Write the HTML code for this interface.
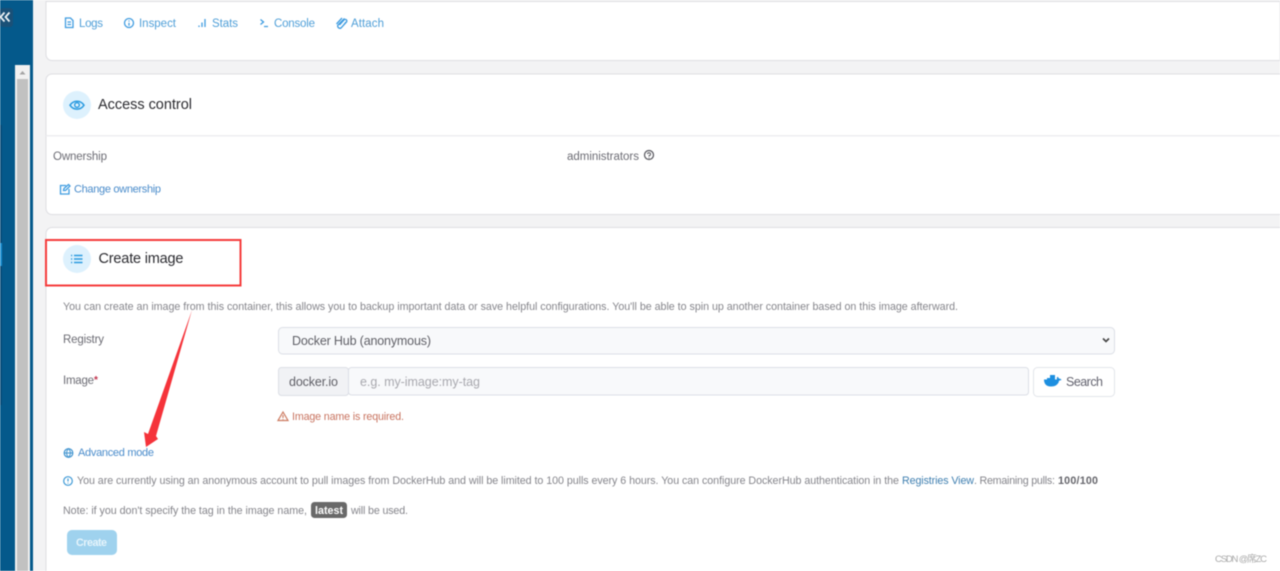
<!DOCTYPE html>
<html><head><meta charset="utf-8"><style>
html,body{margin:0;padding:0;width:1280px;height:571px;overflow:hidden;background:#fff}
svg{display:block;filter:blur(.4px)}
text{font-family:"Liberation Sans","Noto Sans CJK SC",sans-serif;font-size:11.5px;fill:#77777d}
.a{fill:#4f9fd8}.l{fill:#4a8ccb;font-size:11px}.h{font-size:14.500px;fill:#2b2b30}
.i{fill:none;stroke:#3f9ce0;stroke-width:1.300}
</style></head><body>
<svg width="1280" height="571" viewBox="0 0 1280 571" xmlns="http://www.w3.org/2000/svg">
<rect width="1280" height="571" fill="#f3f3f4"/>
<rect width="33" height="571" fill="#04598b"/>
<rect x="0" y="125" width="2" height="280" fill="#0a4e7a"/>
<rect x="0" y="243" width="2" height="23" fill="#1d8fd0"/>
<rect x="0" y="8" width="13" height="19" rx="3" fill="#1a5077"/>
<path d="M4.500 12.500l-4 4.500 4 4.500M9.500 12.500l-4 4.500 4 4.500" fill="none" stroke="#eef2f5" stroke-width="1.800"/>
<rect x="15" y="65" width="15" height="506" fill="#f1f1f1"/>
<rect x="17" y="79" width="11" height="492" fill="#c1c1c1"/>
<path d="M22.500 71l-3 3.500h6z" fill="#a3a3a3"/>
<!-- cards -->
<path d="M46 1.500H1280V60.500H52a6 6 0 0 1-6-6z" fill="#fff" stroke="#dedee2"/>
<rect x="46" y="74" width="1250" height="140.500" rx="6" fill="#fff" stroke="#dedee2"/>
<rect x="46" y="135" width="1234" height="1.500" fill="#eeeef0"/>
<rect x="46" y="227.500" width="1250" height="360" rx="6" fill="#fff" stroke="#dedee2"/>
<!-- tabs -->
<path class="i" d="M65.500 18h5l2.500 2.500v7h-7.500zM67.500 22h3.500M67.500 24.500h3.500"/>
<text class="a" x="79" y="27" textLength="24">Logs</text>
<circle class="i" cx="129" cy="23" r="4.500"/><path class="i" d="M129 20.500v1M129 22.800v3"/>
<text class="a" x="139" y="27" textLength="37">Inspect</text>
<path class="i" d="M199 27v-1.500M202 27v-4.500M205 27v-8" stroke-width="1.500"/>
<text class="a" x="212" y="27" textLength="26">Stats</text>
<path class="i" d="M260.500 19.500l3 2.500-3 2.500M264 26.500h4"/>
<text class="a" x="274" y="27" textLength="41">Console</text>
<path class="i" d="M344.500 18.500l-6.500 6.500a2.200 2.200 0 0 0 3 3l5.500-6a1.500 1.500 0 0 0-2.500-2l-4.500 5M342 18l-5.500 6M346 22l-4 5"/>
<text class="a" x="351" y="27" textLength="33">Attach</text>
<!-- access -->
<circle cx="77" cy="105" r="14" fill="#ddf1fd"/>
<path d="M70 105.200c3.500-5.300 10.500-5.300 14 0-3.500 5.300-10.500 5.300-14 0z" fill="none" stroke="#2b9be0" stroke-width="1.500"/>
<circle cx="77" cy="105" r="2.300" fill="none" stroke="#2b9be0" stroke-width="1.400"/>
<text class="h" x="98" y="109" textLength="94">Access control</text>
<text x="53" y="160" textLength="54" style="fill:#6c6c74">Ownership</text>
<text x="567" y="160" textLength="72" style="fill:#6c6c74">administrators</text>
<circle cx="649" cy="155" r="4.500" fill="none" stroke="#55555c" stroke-width="1.200"/><path d="M647.500 154a1.500 1.500 0 1 1 1.500 1.700v.8M649 157.500v.8" fill="none" stroke="#55555c" stroke-width="1"/>
<path class="i" d="M66 185.500h-5.500v8.500h8.500v-5M63.500 190.500l.5-2 4.500-4 1.500 1.500-4.500 4.500z"/>
<text class="l" x="74" y="192.500" textLength="87">Change ownership</text>
<!-- create image -->
<circle cx="77" cy="259" r="14" fill="#ddf1fd"/>
<path d="M74 255.500h8.500M74 259h8.500M74 262.500h8.500M71 255.500h1.200M71 259h1.200M71 262.500h1.200" stroke="#2b9be0" stroke-width="1.400" fill="none"/>
<text class="h" x="98.500" y="263" textLength="85">Create image</text>
<rect x="46" y="240" width="194.500" height="45.500" fill="none" stroke="#f53c3c" stroke-width="2"/>
<text x="63" y="310" textLength="895" style="fill:#85858b;font-size:10.700px">You can create an image from this container, this allows you to backup important data or save helpful configurations. You'll be able to spin up another container based on this image afterward.</text>
<text x="63" y="343" textLength="41" style="fill:#6c6c74">Registry</text>
<rect x="278.500" y="327.500" width="836" height="26.500" rx="4" fill="#f8f9fb" stroke="#dcdfe6"/>
<text x="292" y="345" textLength="139" style="fill:#5f5f66;font-size:12.500px">Docker Hub (anonymous)</text>
<path d="M1103 338.500l3 3 3-3" fill="none" stroke="#444" stroke-width="1.600"/>
<text x="63" y="384" textLength="31" style="fill:#6c6c74">Image</text><text x="94" y="383" style="fill:#c0304a;font-size:10px;font-weight:bold">*</text>
<rect x="278.500" y="367.500" width="70" height="28" rx="3" fill="#f1f2f5" stroke="#dcdfe6"/>
<rect x="348.500" y="367.500" width="680" height="27.500" rx="3" fill="#f8f9fb" stroke="#dcdfe6"/>
<text x="289" y="386" textLength="49" style="fill:#5f5f66;font-size:12.500px">docker.io</text>
<text x="360" y="386" textLength="120" style="fill:#a8a8ae;font-size:12.500px">e.g. my-image:my-tag</text>
<rect x="1033.500" y="367.500" width="81" height="29" rx="4" fill="#fff" stroke="#e2e5ea"/>
<path d="M1044 382h13c1 0 2-1 2.500-1.500l2-.5c-.5-1-1.500-1.500-2.500-1.300-.3-1-1-1.700-1.500-2-.7.7-1 2-.5 2.800H1044c0 4 2 7 7 7s7-2.500 8-5z" fill="#1d8fe0"/>
<path d="M1047 378h8v3h-8zM1050 375h5v3h-5z" fill="#1d8fe0"/>
<text x="1066" y="386" textLength="37" style="fill:#63636f;font-size:12.500px">Search</text>
<path d="M283 412l5 8.500h-10zM283 415v3M283 419v.6" fill="none" stroke="#cc7a60" stroke-width="1.200"/>
<text x="292" y="420" textLength="112" style="fill:#c8735f;font-size:10.700px">Image name is required.</text>
<circle cx="68.500" cy="453" r="4.300" fill="none" stroke="#3f93cf" stroke-width="1.200"/><path d="M64 453h9M68.500 448.700c-2.500 2.500-2.500 6 0 8.600 2.500-2.600 2.500-6 0-8.600z" fill="none" stroke="#3f93cf"/>
<text class="l" x="78" y="456" textLength="76">Advanced mode</text>
<circle cx="68" cy="481" r="4.300" fill="none" stroke="#3f9ad6" stroke-width="1.200"/><path d="M68 478.500v3M68 482.700v.8" stroke="#3f9ad6" fill="none" stroke-width="1.200"/>
<text x="77" y="484" textLength="822" style="fill:#85858b;font-size:10.700px">You are currently using an anonymous account to pull images from DockerHub and will be limited to 100 pulls every 6 hours. You can configure DockerHub authentication in the</text>
<text x="902" y="484" textLength="72" style="fill:#3f7fb0;font-size:10.700px">Registries View</text>
<text x="974" y="484" textLength="81" style="fill:#85858b;font-size:10.700px">. Remaining pulls:</text>
<text x="1058" y="484" textLength="40" style="fill:#66666c;font-size:10.700px;font-weight:bold">100/100</text>
<text x="63" y="514" textLength="244" style="fill:#85858b;font-size:10.700px">Note: if you don't specify the tag in the image name,</text>
<rect x="311" y="502" width="36" height="16" rx="3.500" fill="#696969"/>
<text x="315" y="514" textLength="28" style="fill:#fff;font-size:10.700px;font-weight:bold">latest</text>
<text x="351" y="514" textLength="57" style="fill:#85858b;font-size:10.700px">will be used.</text>
<rect x="67" y="530" width="50" height="25" rx="5" fill="#9fd2ee"/>
<text x="76" y="546" textLength="31" style="fill:#e6f4fb;font-size:10.700px;font-weight:bold">Create</text>
<!-- red arrow -->
<polygon points="192,310 156,436 158,439 146,447 144,432 148,434" fill="#f5333a"/>
<text x="1215" y="562" textLength="52" style="fill:#a9a9a9;font-size:9.500px">CSDN @席ZC</text>
</svg>
</body></html>
